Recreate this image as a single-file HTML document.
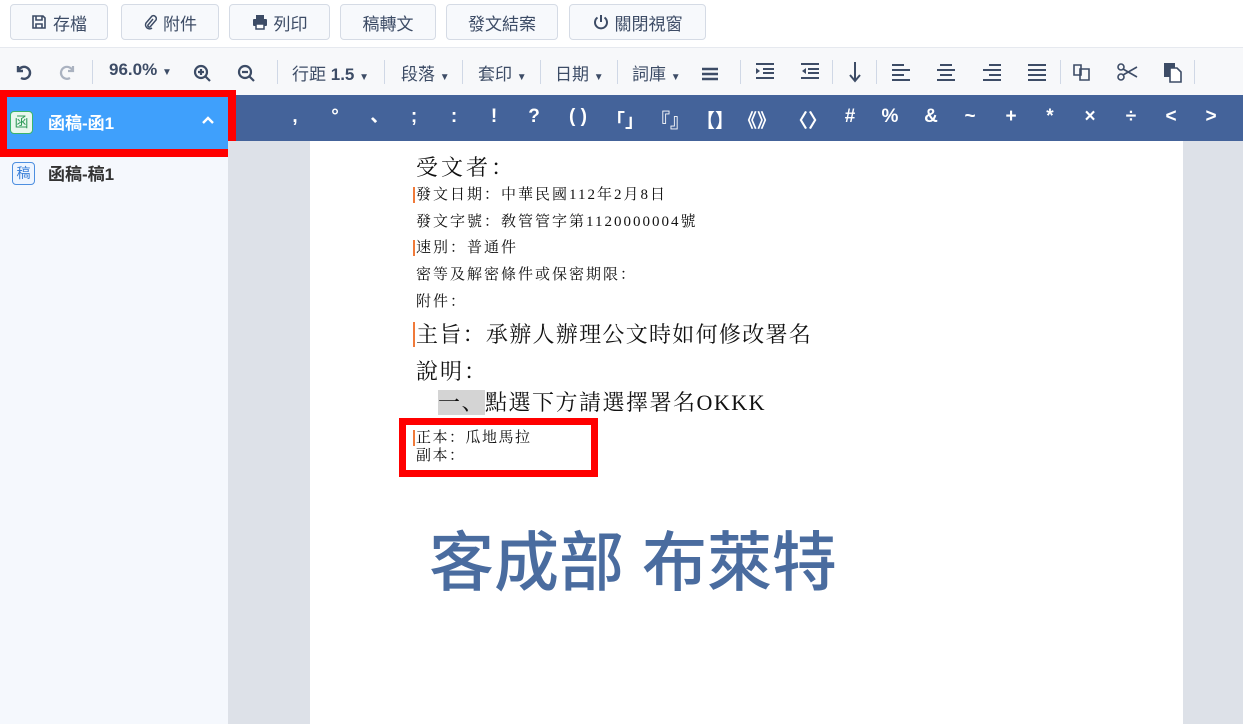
<!DOCTYPE html>
<html><head><meta charset="utf-8"><style>
*{margin:0;padding:0;box-sizing:border-box}
body{width:1243px;height:724px;overflow:hidden;background:#fff;font-family:"Liberation Sans","Noto Sans CJK TC",sans-serif;position:relative}
.btn{position:absolute;top:4px;height:36px;border:1px solid #d5dbe5;border-radius:4px;background:#f7f9fc;color:#3d4c66;font-size:17px;display:flex;align-items:center;justify-content:center;gap:6px}
.tb{position:absolute;top:47px;left:0;width:1243px;height:48px;background:#f7f8fa;border-top:1px solid #e6e9ef}
.t{position:absolute;top:60px;font-size:17px;color:#3d4c66;white-space:nowrap}
.sep{position:absolute;top:60px;width:1px;height:24px;background:#d0d8e6}
.pb{position:absolute;left:228px;top:95px;width:1015px;height:46px;background:#44639a;color:#fff;font-size:19px;font-weight:bold}
.pb span{position:absolute;top:11px;transform:translateX(-50%);white-space:nowrap}
.side{position:absolute;left:0;top:95px;width:228px;height:629px;background:#f5f8fd}
.gray{position:absolute;left:228px;top:141px;width:1015px;height:583px;background:#dde1e8}
.page{position:absolute;left:310px;top:141px;width:873px;height:583px;background:#fff}
.d{position:absolute;left:416px;font-family:"Liberation Serif","Noto Serif CJK SC",serif;color:#111;white-space:nowrap}
.s{font-size:15px;letter-spacing:2px}
.bar{border-left:2px solid #f07a3a;padding-left:1px;margin-left:-3px}
.ic{stroke:#3d4c66;fill:none;stroke-width:2}
</style></head><body>
<div class="btn" style="left:10px;width:98px"><svg width="16" height="16" viewBox="0 0 16 16" class="ic" style="stroke-width:1.6"><path d="M2 2h10l2 2v10H2z M5 2v4h6V2 M5 14v-4h6v4"/></svg>存檔</div>
<div class="btn" style="left:121px;width:98px"><svg width="14" height="16" viewBox="0 0 14 16" class="ic" style="stroke-width:1.5"><path d="M10 5L5 11a1.5 1.5 0 0 0 2 2l6-7a3 3 0 0 0-4-4L3 9a4 4 0 0 0 6 5"/></svg>附件</div>
<div class="btn" style="left:229px;width:101px"><svg width="16" height="16" viewBox="0 0 16 16"><rect x="4" y="1" width="8" height="4" fill="#3d4c66"/><rect x="1" y="5" width="14" height="7" rx="1" fill="#3d4c66"/><rect x="4" y="10" width="8" height="5" fill="#fff" stroke="#3d4c66" stroke-width="1.5"/></svg>列印</div>
<div class="btn" style="left:340px;width:96px">稿轉文</div>
<div class="btn" style="left:446px;width:112px">發文結案</div>
<div class="btn" style="left:569px;width:137px"><svg width="16" height="16" viewBox="0 0 16 16" class="ic" style="stroke-width:2"><path d="M8 1v7 M4.5 3.5a6 6 0 1 0 7 0"/></svg>關閉視窗</div>
<div class="tb"></div>
<svg style="position:absolute;left:13px;top:62px" width="20" height="20" viewBox="0 0 20 20"><path d="M5 4v5h5 M5.5 8.5A6 6 0 1 1 8 16" stroke="#3d4c66" stroke-width="2.4" fill="none"/></svg>
<svg style="position:absolute;left:58px;top:62px" width="20" height="20" viewBox="0 0 20 20"><path d="M15 4v5h-5 M14.5 8.5A6 6 0 1 0 12 16" stroke="#aab2c0" stroke-width="2.2" fill="none"/></svg>
<div class="sep" style="left:92px"></div>
<div class="t" style="left:109px;font-weight:bold">96.0% <span style="font-size:10px">▼</span></div>
<svg style="position:absolute;left:193px;top:64px" width="20" height="20" viewBox="0 0 20 20"><circle cx="8" cy="8" r="6" stroke="#3d4c66" stroke-width="2.2" fill="none"/><path d="M12.5 12.5L17 17 M5 8h6 M8 5v6" stroke="#3d4c66" stroke-width="2.2"/></svg>
<svg style="position:absolute;left:237px;top:64px" width="20" height="20" viewBox="0 0 20 20"><circle cx="8" cy="8" r="6" stroke="#3d4c66" stroke-width="2.2" fill="none"/><path d="M12.5 12.5L17 17 M5 8h6" stroke="#3d4c66" stroke-width="2.2"/></svg>
<div class="sep" style="left:277px"></div>
<div class="t" style="left:292px">行距 <b>1.5</b> <span style="font-size:10px">▼</span></div>
<div class="sep" style="left:384px"></div>
<div class="t" style="left:401px">段落 <span style="font-size:10px">▼</span></div>
<div class="sep" style="left:462px"></div>
<div class="t" style="left:478px">套印 <span style="font-size:10px">▼</span></div>
<div class="sep" style="left:540px"></div>
<div class="t" style="left:555px">日期 <span style="font-size:10px">▼</span></div>
<div class="sep" style="left:617px"></div>
<div class="t" style="left:632px">詞庫 <span style="font-size:10px">▼</span></div>
<svg style="position:absolute;left:700px;top:66px" width="20" height="16"><path d="M2 3h16M2 8h16M2 13h16" stroke="#3d4c66" stroke-width="2.4"/></svg>
<div class="sep" style="left:740px"></div>
<svg style="position:absolute;left:754px;top:62px" width="22" height="18"><path d="M2 2h18M9 7h11M9 11h11M2 16h18" stroke="#3d4c66" stroke-width="2"/><path d="M2 6l4 3-4 3z" fill="#3d4c66"/></svg>
<svg style="position:absolute;left:799px;top:62px" width="22" height="18"><path d="M2 2h18M9 7h11M9 11h11M2 16h18" stroke="#3d4c66" stroke-width="2"/><path d="M7 6l-4 3 4 3z" fill="#3d4c66"/></svg>
<div class="sep" style="left:832px"></div>
<svg style="position:absolute;left:847px;top:60px" width="16" height="24"><path d="M8 2v18M3 15l5 6 5-6" stroke="#3d4c66" stroke-width="2" fill="none"/></svg>
<div class="sep" style="left:876px"></div>
<svg style="position:absolute;left:891px;top:63px" width="20" height="18"><path d="M1 2h12M1 7h18M1 12h12M1 17h18" stroke="#3d4c66" stroke-width="2"/></svg>
<svg style="position:absolute;left:936px;top:63px" width="20" height="18"><path d="M4 2h12M1 7h18M4 12h12M1 17h18" stroke="#3d4c66" stroke-width="2"/></svg>
<svg style="position:absolute;left:982px;top:63px" width="20" height="18"><path d="M7 2h12M1 7h18M7 12h12M1 17h18" stroke="#3d4c66" stroke-width="2"/></svg>
<svg style="position:absolute;left:1027px;top:63px" width="20" height="18"><path d="M1 2h18M1 7h18M1 12h18M1 17h18" stroke="#3d4c66" stroke-width="2"/></svg>
<div class="sep" style="left:1060px"></div>
<svg style="position:absolute;left:1072px;top:62px" width="20" height="20" viewBox="0 0 20 20" fill="none" stroke="#3d4c66" stroke-width="1.6"><path d="M2 3h7v10H2z M8 7h9v11H8z"/></svg>
<svg style="position:absolute;left:1117px;top:62px" width="22" height="20" viewBox="0 0 22 20" fill="none" stroke="#3d4c66" stroke-width="1.6"><circle cx="4" cy="5" r="3"/><circle cx="4" cy="15" r="3"/><path d="M6 7l14 8M6 13l14-8"/></svg>
<svg style="position:absolute;left:1162px;top:61px" width="22" height="22" viewBox="0 0 22 22"><rect x="2" y="2" width="11" height="14" fill="#3d4c66"/><path d="M8 7h7l4 4v10H8z" fill="#fff" stroke="#3d4c66" stroke-width="1.6"/></svg>
<div class="sep" style="left:1194px"></div>

<div class="pb">
<span style="left:67px">,</span><span style="left:107px">°</span><span style="left:146px">、</span><span style="left:186px">;</span><span style="left:226px">:</span><span style="left:266px">!</span><span style="left:306px">?</span><span style="left:350px">( )</span><span style="left:397px">「」</span><span style="left:442px">『』</span><span style="left:487px">【】</span><span style="left:529px">《》</span><span style="left:580px">〈〉</span><span style="left:622px">#</span><span style="left:662px">%</span><span style="left:703px">&amp;</span><span style="left:742px">~</span><span style="left:783px">+</span><span style="left:822px">*</span><span style="left:862px">×</span><span style="left:903px">÷</span><span style="left:943px">&lt;</span><span style="left:983px">&gt;</span>
</div>
<div class="side"></div>
<div style="position:absolute;left:0;top:90px;width:236px;height:67px;background:#f00"></div>
<div style="position:absolute;left:7px;top:97px;width:221px;height:52px;background:#3fa0fc"></div>
<div style="position:absolute;left:10px;top:111px;width:23px;height:23px;background:#e8f7ee;border:1px solid #3bb56c;border-radius:4px;color:#2e9a58;font-size:14px;text-align:center;line-height:21px">函</div>
<div style="position:absolute;left:48px;top:109px;color:#fff;font-size:17px;font-weight:bold">函稿-函1</div>
<svg style="position:absolute;left:201px;top:115px" width="14" height="10"><path d="M2 8l5-5 5 5" stroke="#fff" stroke-width="2.4" fill="none"/></svg>
<div style="position:absolute;left:12px;top:162px;width:23px;height:23px;background:#eef5ff;border:1px solid #4d8fe0;border-radius:4px;color:#3b80d8;font-size:14px;text-align:center;line-height:21px">稿</div>
<div style="position:absolute;left:48px;top:160px;color:#333;font-size:17px;font-weight:bold">函稿-稿1</div>

<div class="gray"></div>
<div class="page"></div>
<div class="d" style="top:151px;font-size:22px;letter-spacing:3px">受文者：</div>
<div class="d s" style="top:183px"><span class="bar">發文日期：中華民國112年2月8日</span></div>
<div class="d s" style="top:210px">發文字號：敎管管字第1120000004號</div>
<div class="d s" style="top:236px"><span class="bar">速別：普通件</span></div>
<div class="d s" style="top:263px">密等及解密條件或保密期限：</div>
<div class="d s" style="top:290px">附件：</div>
<div class="d" style="top:318px;font-size:22px;line-height:34px;letter-spacing:1.3px"><span class="bar">主旨：承辦人辦理公文時如何修改署名</span></div>
<div class="d" style="top:355px;font-size:22px;letter-spacing:2px">說明：</div>
<div class="d" style="left:438px;top:387px;font-size:22px;line-height:32px;letter-spacing:1.5px"><span style="background:#d4d4d4">一、</span>點選下方請選擇署名OKKK</div>
<div style="position:absolute;left:399px;top:418px;width:199px;height:59px;border:7px solid #f00"></div>
<div class="d s" style="top:429px;line-height:18px;letter-spacing:1.5px"><span class="bar">正本：瓜地馬拉</span><br>副本：</div>
<div style="position:absolute;left:429px;top:510px;font-size:65px;color:#4a6c9f;font-family:'Liberation Sans','Noto Sans CJK TC',sans-serif;white-space:nowrap;font-weight:500">客成部 布萊特</div>
</body></html>
